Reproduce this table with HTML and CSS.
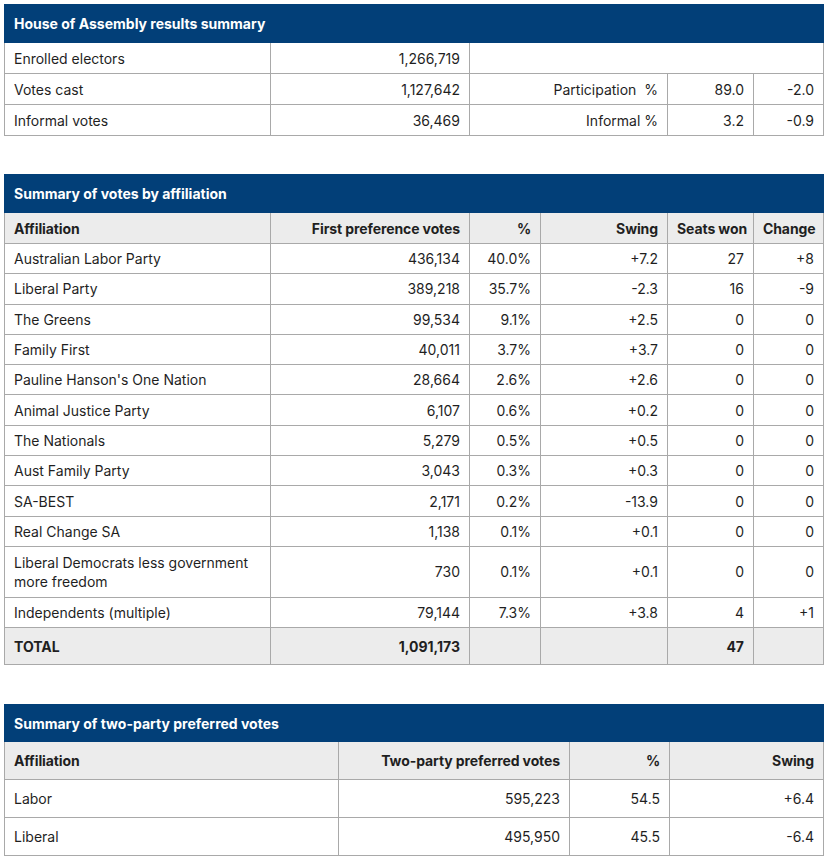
FILE: index.html
```html
<!DOCTYPE html>
<html lang="en">
<head>
<meta charset="utf-8">
<title>Results summary</title>
<link rel="stylesheet" href="styles.css">
</head>
<body>
<main class="page">
  <table class="tbl t1">
    <colgroup><col class="c266"><col class="c199"><col class="c198"><col class="c86"><col class="c70"></colgroup>
    <tr><th class="cap" colspan="5">House of Assembly results summary</th></tr>
    <tr><td>Enrolled electors</td><td class="r">1,266,719</td><td colspan="3"></td></tr>
    <tr><td>Votes cast</td><td class="r">1,127,642</td><td class="r">Participation&nbsp; %</td><td class="r">89.0</td><td class="r">-2.0</td></tr>
    <tr><td>Informal votes</td><td class="r">36,469</td><td class="r">Informal %</td><td class="r">3.2</td><td class="r">-0.9</td></tr>
  </table>

  <table class="tbl t2">
    <colgroup><col class="c266"><col class="c199"><col class="c71"><col class="c127"><col class="c86"><col class="c70"></colgroup>
    <tr><th class="cap" colspan="6">Summary of votes by affiliation</th></tr>
    <tr class="head"><th>Affiliation</th><th class="r">First preference votes</th><th class="r">%</th><th class="r">Swing</th><th class="r">Seats won</th><th class="r">Change</th></tr>
    <tr><td>Australian Labor Party</td><td class="r">436,134</td><td class="r">40.0%</td><td class="r">+7.2</td><td class="r">27</td><td class="r">+8</td></tr>
    <tr><td>Liberal Party</td><td class="r">389,218</td><td class="r">35.7%</td><td class="r">-2.3</td><td class="r">16</td><td class="r">-9</td></tr>
    <tr><td>The Greens</td><td class="r">99,534</td><td class="r">9.1%</td><td class="r">+2.5</td><td class="r">0</td><td class="r">0</td></tr>
    <tr><td>Family First</td><td class="r">40,011</td><td class="r">3.7%</td><td class="r">+3.7</td><td class="r">0</td><td class="r">0</td></tr>
    <tr><td>Pauline Hanson's One Nation</td><td class="r">28,664</td><td class="r">2.6%</td><td class="r">+2.6</td><td class="r">0</td><td class="r">0</td></tr>
    <tr><td>Animal Justice Party</td><td class="r">6,107</td><td class="r">0.6%</td><td class="r">+0.2</td><td class="r">0</td><td class="r">0</td></tr>
    <tr><td>The Nationals</td><td class="r">5,279</td><td class="r">0.5%</td><td class="r">+0.5</td><td class="r">0</td><td class="r">0</td></tr>
    <tr><td>Aust Family Party</td><td class="r">3,043</td><td class="r">0.3%</td><td class="r">+0.3</td><td class="r">0</td><td class="r">0</td></tr>
    <tr><td>SA-BEST</td><td class="r">2,171</td><td class="r">0.2%</td><td class="r">-13.9</td><td class="r">0</td><td class="r">0</td></tr>
    <tr><td>Real Change SA</td><td class="r">1,138</td><td class="r">0.1%</td><td class="r">+0.1</td><td class="r">0</td><td class="r">0</td></tr>
    <tr class="tall"><td>Liberal Democrats less government more freedom</td><td class="r">730</td><td class="r">0.1%</td><td class="r">+0.1</td><td class="r">0</td><td class="r">0</td></tr>
    <tr><td>Independents (multiple)</td><td class="r">79,144</td><td class="r">7.3%</td><td class="r">+3.8</td><td class="r">4</td><td class="r">+1</td></tr>
    <tr class="total"><th>TOTAL</th><th class="r">1,091,173</th><th></th><th></th><th class="r">47</th><th></th></tr>
  </table>

  <table class="tbl t3">
    <colgroup><col class="c334"><col class="c231"><col class="c100"><col class="c154"></colgroup>
    <tr><th class="cap" colspan="4">Summary of two-party preferred votes</th></tr>
    <tr class="head"><th>Affiliation</th><th class="r">Two-party preferred votes</th><th class="r">%</th><th class="r">Swing</th></tr>
    <tr><td>Labor</td><td class="r">595,223</td><td class="r">54.5</td><td class="r">+6.4</td></tr>
    <tr><td>Liberal</td><td class="r">495,950</td><td class="r">45.5</td><td class="r">-6.4</td></tr>
  </table>
</main>
</body>
</html>
```
FILE: styles.css
```css
html, body {
  margin: 0;
  padding: 0;
  background: #ffffff;
}
body {
  font-family: "Inter", "Liberation Sans", sans-serif;
  font-size: 14px;
  color: #1f1f1f;
}
.page {
  padding: 4px 5px 0 4px;
  display: flex;
  flex-direction: column;
  gap: 38px;
}
.tbl {
  width: 819px;
  table-layout: fixed;
  border-collapse: collapse;
  border: 1px solid #a9a9a9;
}
.tbl td, .tbl th {
  border: 1px solid #a9a9a9;
  padding: 0 9px;
  height: 30px;
  text-align: left;
  font-weight: 400;
  line-height: 19px;
  vertical-align: middle;
  white-space: nowrap;
}
.tbl .r { text-align: right; }
.tbl .tall td { white-space: normal; height: 50px; }
.tbl th.cap {
  background: #023f78;
  color: #ffffff;
  font-weight: 700;
  height: 37px;
  border-color: #023f78;
}
.tbl .head th {
  background: #ececec;
  font-weight: 700;
  height: 30px;
  letter-spacing: -0.1px;
}
.t2 td { height: 29.3px; }
.t2 .tall td { height: 50px; }
.tbl .total th {
  background: #ececec;
  font-weight: 700;
  height: 36px;
}
.t3 { margin-top: 1px; }
.t3 th.cap { height: 36px; }
.t3 td { height: 37px; }
.t3 .head th { height: 37px; }

.c266 { width: 266px; }
.c199 { width: 199px; }
.c198 { width: 198px; }
.c86 { width: 86px; }
.c70 { width: 70px; }
.c71 { width: 71px; }
.c127 { width: 127px; }
.c334 { width: 334px; }
.c231 { width: 231px; }
.c100 { width: 100px; }
.c154 { width: 154px; }
```
